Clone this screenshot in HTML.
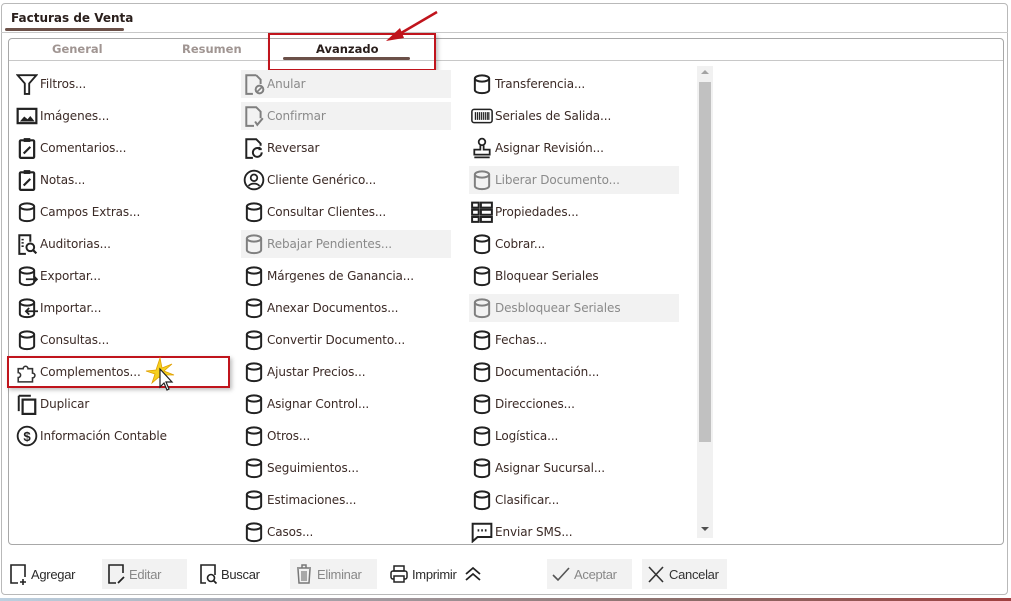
<!DOCTYPE html>
<html><head><meta charset="utf-8"><style>
*{box-sizing:border-box;margin:0;padding:0}
body{width:1011px;height:601px;background:#fff;font-family:"DejaVu Sans","Liberation Sans",sans-serif;font-size:12px;color:#3b2a26;position:relative;overflow:hidden}
.abs{position:absolute}
.frame{left:1px;top:3px;width:1007px;height:592px;border:1px solid #b9b9b9;border-radius:4px}
.panel{left:8px;top:38px;width:996px;height:507px;border:1px solid #a8a8a8;border-radius:4px}
.row{position:absolute;height:28px;width:210px;display:flex;align-items:center;letter-spacing:-0.1px}
.row svg{width:22px;height:22px;margin-left:2px;margin-right:2px;flex:none}
.dis{background:#f2f2f2;color:#8a8a8a}
.dis svg{opacity:.55}
.bt{position:absolute;top:559px;height:30px;display:flex;align-items:center;font-family:"Liberation Sans",sans-serif;font-size:13px;color:#2b2b2b;letter-spacing:-0.3px}
.bt svg{width:20px;height:22px;margin:0 3px 0 4px}
.bt.g{background:#f2f2f2;color:#888}
</style></head><body>
<svg width="0" height="0" style="position:absolute">
<defs>
<g id="cyl" fill="none" stroke="#222" stroke-width="1.8"><ellipse cx="10" cy="5" rx="6.5" ry="2.8"/><path d="M3.5 5v10.5c0 1.6 2.9 2.8 6.5 2.8s6.5-1.2 6.5-2.8V5"/></g>
</defs>
</svg>
<div class="abs frame"></div>
<div class="abs" style="left:11px;top:11px;font-weight:bold;font-size:12px;color:#2a1f1c">Facturas de Venta</div>
<div class="abs" style="left:5px;top:28px;width:119px;height:3px;background:#6b5048;border-radius:2px"></div>
<div class="abs" style="left:1px;top:32px;width:1007px;height:1px;background:#c8c8c8"></div>
<div class="abs panel"></div>
<div class="abs" style="left:9px;top:60px;width:994px;height:1px;background:#c8c8c8"></div>
<div class="abs" style="left:52px;top:42px;font-weight:bold;font-size:11.5px;color:#a09592">General</div>
<div class="abs" style="left:182px;top:42px;font-weight:bold;font-size:11.5px;color:#a09592">Resumen</div>
<div class="abs" style="left:316px;top:42px;font-weight:bold;font-size:11.5px;color:#2a1f1c">Avanzado</div>
<div class="abs" style="left:283px;top:57px;width:127px;height:3px;background:#6b5048;border-radius:2px"></div>
<div class="abs" style="left:268px;top:33px;width:168px;height:38px;border:2px solid #c0141c;box-shadow:2px 2px 4px rgba(0,0,0,.25)"></div>
<svg class="abs" style="left:380px;top:8px" width="64" height="40"><line x1="57" y1="4" x2="16" y2="28" stroke="#c0141c" stroke-width="2.5"/><path d="M6 33L20 20L24 30Z" fill="#c0141c"/></svg>

<div class="abs" style="left:697px;top:66px;width:16px;height:472px;background:#f1f1f1"></div>
<div class="abs" style="left:699px;top:82px;width:12px;height:360px;background:#c1c1c1"></div>
<div class="abs" style="left:701px;top:70px;border:4px solid transparent;border-bottom:4px solid #a3a3a3;border-top:0"></div>
<div class="abs" style="left:701px;top:527px;border:4px solid transparent;border-top:4px solid #505050;border-bottom:0"></div>

<div class="row" style="left:14px;top:70px"><svg viewBox="0 0 20 20"><path d="M1.5 2h17l-6.5 7.5V19h-4V9.5z" fill="none" stroke="#222" stroke-width="1.7"/></svg>Filtros...</div>
<div class="row" style="left:14px;top:102px"><svg viewBox="0 0 20 20"><rect x="1.5" y="3.5" width="17" height="13" fill="none" stroke="#222" stroke-width="2"/><path d="M3.5 15l4-4.5 3 2.5 2.5-3 4 5z" fill="#222"/></svg>Imágenes...</div>
<div class="row" style="left:14px;top:134px"><svg viewBox="0 0 20 20"><rect x="3.5" y="3" width="13" height="16" rx="1" fill="none" stroke="#222" stroke-width="2"/><rect x="7" y="1" width="6" height="3.5" fill="#222"/><path d="M7 15l6-6" stroke="#222" stroke-width="2"/></svg>Comentarios...</div>
<div class="row" style="left:14px;top:166px"><svg viewBox="0 0 20 20"><rect x="3.5" y="3" width="13" height="16" rx="1" fill="none" stroke="#222" stroke-width="2"/><rect x="7" y="1" width="6" height="3.5" fill="#222"/><path d="M7 15l6-6" stroke="#222" stroke-width="2"/></svg>Notas...</div>
<div class="row" style="left:14px;top:198px"><svg viewBox="0 0 20 20"><use href="#cyl"/></svg>Campos Extras...</div>
<div class="row" style="left:14px;top:230px"><svg viewBox="0 0 20 20"><path d="M13 8V2H3v17h6" fill="none" stroke="#222" stroke-width="1.8"/><path d="M5 6h2M5 9h2M5 12h2" stroke="#222" stroke-width="1.4"/><circle cx="13" cy="13" r="3.5" fill="none" stroke="#222" stroke-width="1.8"/><path d="M15.5 15.5l3 3" stroke="#222" stroke-width="2"/></svg>Auditorias...</div>
<div class="row" style="left:14px;top:262px"><svg viewBox="0 0 20 20"><use href="#cyl"/><path d="M9 13h10M16 10l3 3-3 3" fill="none" stroke="#222" stroke-width="1.6"/></svg>Exportar...</div>
<div class="row" style="left:14px;top:294px"><svg viewBox="0 0 20 20"><use href="#cyl"/><path d="M20 13H9M12 10l-3 3 3 3" fill="none" stroke="#222" stroke-width="1.6"/></svg>Importar...</div>
<div class="row" style="left:14px;top:326px"><svg viewBox="0 0 20 20"><use href="#cyl"/></svg>Consultas...</div>
<div class="row" style="left:14px;top:358px"><svg viewBox="0 0 20 20"><path d="M2 7h4.5a2.2 2.2 0 114.4 0H15v4a2.2 2.2 0 110 4.4V19H2v-4a2.2 2.2 0 100-4.4z" fill="none" stroke="#333" stroke-width="1.4"/></svg>Complementos...</div>
<div class="abs" style="left:7px;top:356px;width:223px;height:32px;border:2px solid #c0141c;box-shadow:2px 2px 4px rgba(0,0,0,.25)"></div>
<svg class="abs" style="left:144px;top:356px" width="40" height="42"><path d="M16 2l2 10 10-4-8 7 10 4-11 0 2 10-6-8-7 6 3-9-9-3 10-1z" fill="#f5d020" stroke="#e0a000" stroke-width=".8"/><path d="M16 13v18l4-4 3 7 2-1-3-7h6z" fill="#fff" stroke="#222" stroke-width="1.2"/></svg>
<div class="row" style="left:14px;top:390px"><svg viewBox="0 0 20 20"><path d="M2.5 2.5h11M2.5 2.5v14" fill="none" stroke="#222" stroke-width="1.8"/><rect x="6" y="6" width="11.5" height="13" fill="none" stroke="#222" stroke-width="2"/></svg>Duplicar</div>
<div class="row" style="left:14px;top:422px"><svg viewBox="0 0 20 20"><circle cx="10" cy="10" r="8.5" fill="none" stroke="#222" stroke-width="1.7"/><text x="10" y="14.5" font-size="12" text-anchor="middle" font-family="Liberation Sans" fill="#222" font-weight="bold">$</text></svg>Información Contable</div>

<div class="row dis" style="left:241px;top:70px"><svg viewBox="0 0 20 20"><path d="M12 2H3v17h6M12 2l4 4v4" fill="none" stroke="#222" stroke-width="1.8"/><circle cx="15" cy="15" r="3.5" fill="none" stroke="#222" stroke-width="1.8"/><path d="M13 17l4-4" stroke="#222" stroke-width="1.5"/></svg>Anular</div>
<div class="row dis" style="left:241px;top:102px"><svg viewBox="0 0 20 20"><path d="M10 19H3V2h9l4 4v6" fill="none" stroke="#222" stroke-width="1.8"/><path d="M11 15l2 3 5-6" fill="none" stroke="#222" stroke-width="1.8"/></svg>Confirmar</div>
<div class="row" style="left:241px;top:134px"><svg viewBox="0 0 20 20"><path d="M9 19H3V2h9l4 4v2" fill="none" stroke="#222" stroke-width="1.8"/><path d="M17 14a4 4 0 11-2-3.4M15 9v2h2" fill="none" stroke="#222" stroke-width="1.8"/></svg>Reversar</div>
<div class="row" style="left:241px;top:166px"><svg viewBox="0 0 20 20"><circle cx="10" cy="10" r="8.5" fill="none" stroke="#222" stroke-width="1.7"/><circle cx="10" cy="8" r="3" fill="none" stroke="#222" stroke-width="1.6"/><path d="M5 15.5c2-3 8-3 10 0" fill="none" stroke="#222" stroke-width="1.6"/></svg>Cliente Genérico...</div>
<div class="row" style="left:241px;top:198px"><svg viewBox="0 0 20 20"><use href="#cyl"/></svg>Consultar Clientes...</div>
<div class="row dis" style="left:241px;top:230px"><svg viewBox="0 0 20 20"><use href="#cyl"/></svg>Rebajar Pendientes...</div>
<div class="row" style="left:241px;top:262px"><svg viewBox="0 0 20 20"><use href="#cyl"/></svg>Márgenes de Ganancia...</div>
<div class="row" style="left:241px;top:294px"><svg viewBox="0 0 20 20"><use href="#cyl"/></svg>Anexar Documentos...</div>
<div class="row" style="left:241px;top:326px"><svg viewBox="0 0 20 20"><use href="#cyl"/></svg>Convertir Documento...</div>
<div class="row" style="left:241px;top:358px"><svg viewBox="0 0 20 20"><use href="#cyl"/></svg>Ajustar Precios...</div>
<div class="row" style="left:241px;top:390px"><svg viewBox="0 0 20 20"><use href="#cyl"/></svg>Asignar Control...</div>
<div class="row" style="left:241px;top:422px"><svg viewBox="0 0 20 20"><use href="#cyl"/></svg>Otros...</div>
<div class="row" style="left:241px;top:454px"><svg viewBox="0 0 20 20"><use href="#cyl"/></svg>Seguimientos...</div>
<div class="row" style="left:241px;top:486px"><svg viewBox="0 0 20 20"><use href="#cyl"/></svg>Estimaciones...</div>
<div class="row" style="left:241px;top:518px"><svg viewBox="0 0 20 20"><use href="#cyl"/></svg>Casos...</div>

<div class="row" style="left:469px;top:70px"><svg viewBox="0 0 20 20"><use href="#cyl"/></svg>Transferencia...</div>
<div class="row" style="left:469px;top:102px"><svg viewBox="0 0 20 20"><rect x="0.8" y="4" width="18.4" height="12" rx="2" fill="none" stroke="#222" stroke-width="1.4"/><path d="M4 6.5v7M5.8 6.5v7M7.6 6.5v7M9.4 6.5v7M11.2 6.5v7M13 6.5v7M14.8 6.5v7M16.2 6.5v7" stroke="#222" stroke-width="1.1"/></svg>Seriales de Salida...</div>
<div class="row" style="left:469px;top:134px"><svg viewBox="0 0 20 20"><circle cx="10" cy="4.5" r="3" fill="none" stroke="#222" stroke-width="1.6"/><path d="M8.5 7.5v4H3v4.5h14v-4.5h-5.5v-4M3 18.5h14" fill="none" stroke="#222" stroke-width="1.6"/></svg>Asignar Revisión...</div>
<div class="row dis" style="left:469px;top:166px"><svg viewBox="0 0 20 20"><use href="#cyl"/></svg>Liberar Documento...</div>
<div class="row" style="left:469px;top:198px"><svg viewBox="0 0 20 20"><path d="M1 1.5h6v4.5H1zM9 1.5h10v4.5H9zM1 8h6v4.5H1zM9 8h10v4.5H9zM1 14.5h6V19H1zM9 14.5h10V19H9z" fill="none" stroke="#222" stroke-width="1.8"/></svg>Propiedades...</div>
<div class="row" style="left:469px;top:230px"><svg viewBox="0 0 20 20"><use href="#cyl"/></svg>Cobrar...</div>
<div class="row" style="left:469px;top:262px"><svg viewBox="0 0 20 20"><use href="#cyl"/></svg>Bloquear Seriales</div>
<div class="row dis" style="left:469px;top:294px"><svg viewBox="0 0 20 20"><use href="#cyl"/></svg>Desbloquear Seriales</div>
<div class="row" style="left:469px;top:326px"><svg viewBox="0 0 20 20"><use href="#cyl"/></svg>Fechas...</div>
<div class="row" style="left:469px;top:358px"><svg viewBox="0 0 20 20"><use href="#cyl"/></svg>Documentación...</div>
<div class="row" style="left:469px;top:390px"><svg viewBox="0 0 20 20"><use href="#cyl"/></svg>Direcciones...</div>
<div class="row" style="left:469px;top:422px"><svg viewBox="0 0 20 20"><use href="#cyl"/></svg>Logística...</div>
<div class="row" style="left:469px;top:454px"><svg viewBox="0 0 20 20"><use href="#cyl"/></svg>Asignar Sucursal...</div>
<div class="row" style="left:469px;top:486px"><svg viewBox="0 0 20 20"><use href="#cyl"/></svg>Clasificar...</div>
<div class="row" style="left:469px;top:518px"><svg viewBox="0 0 20 20"><path d="M1.5 2.5h17v12H6l-4.5 4z" fill="none" stroke="#222" stroke-width="1.8"/><path d="M6 8.5h1.5M9.3 8.5h1.5M12.6 8.5h1.5" stroke="#222" stroke-width="2"/></svg>Enviar SMS...</div>

<div class="bt" style="left:4px;width:80px"><svg viewBox="0 0 20 22"><path d="M10 20H3V2h14v12" fill="none" stroke="#222" stroke-width="1.6"/><path d="M15 16v6M12 19h6" stroke="#222" stroke-width="1.6"/></svg>Agregar</div>
<div class="bt g" style="left:102px;width:85px"><svg viewBox="0 0 20 22"><path d="M10 20H3V2h14v8" fill="none" stroke="#222" stroke-width="1.6"/><path d="M12 20l6-6" stroke="#222" stroke-width="1.8"/></svg>Editar</div>
<div class="bt" style="left:194px;width:80px"><svg viewBox="0 0 20 22"><path d="M8 20H3V2h14v10" fill="none" stroke="#222" stroke-width="1.6"/><circle cx="13" cy="15" r="3.5" fill="none" stroke="#222" stroke-width="1.6"/><path d="M15.5 17.5l3 3" stroke="#222" stroke-width="1.8"/></svg>Buscar</div>
<div class="bt g" style="left:290px;width:87px"><svg viewBox="0 0 20 22"><path d="M3 5h14M8 5V2h4v3M4 6l1 14h10l1-14" fill="none" stroke="#777" stroke-width="1.5"/><path d="M8 8v10M10 8v10M12 8v10" stroke="#777" stroke-width="1.2"/></svg>Eliminar</div>
<div class="bt" style="left:385px;width:115px"><svg viewBox="0 0 20 22"><rect x="5" y="3" width="10" height="5" fill="none" stroke="#222" stroke-width="1.5"/><rect x="2" y="8" width="16" height="8" rx="2" fill="none" stroke="#222" stroke-width="1.5"/><rect x="5" y="13" width="10" height="6" fill="#fff" stroke="#222" stroke-width="1.5"/></svg>Imprimir <svg viewBox="0 0 20 22" style="margin-left:6px"><path d="M3 11l7-6 7 6M3 17l7-6 7 6" fill="none" stroke="#222" stroke-width="1.8"/></svg></div>
<div class="bt g" style="left:547px;width:85px"><svg viewBox="0 0 20 22"><path d="M2 12l5 5L18 5" fill="none" stroke="#555" stroke-width="1.6"/></svg>Aceptar</div>
<div class="bt g" style="left:642px;width:85px;color:#333"><svg viewBox="0 0 20 22"><path d="M3 4l14 15M17 4L3 19" stroke="#333" stroke-width="1.6"/></svg>Cancelar</div>
<div class="abs" style="left:0;top:598px;width:1011px;height:3px;background:linear-gradient(90deg,#bcd0e0,#8a6a66 70%,#a04040)"></div>
</body></html>
